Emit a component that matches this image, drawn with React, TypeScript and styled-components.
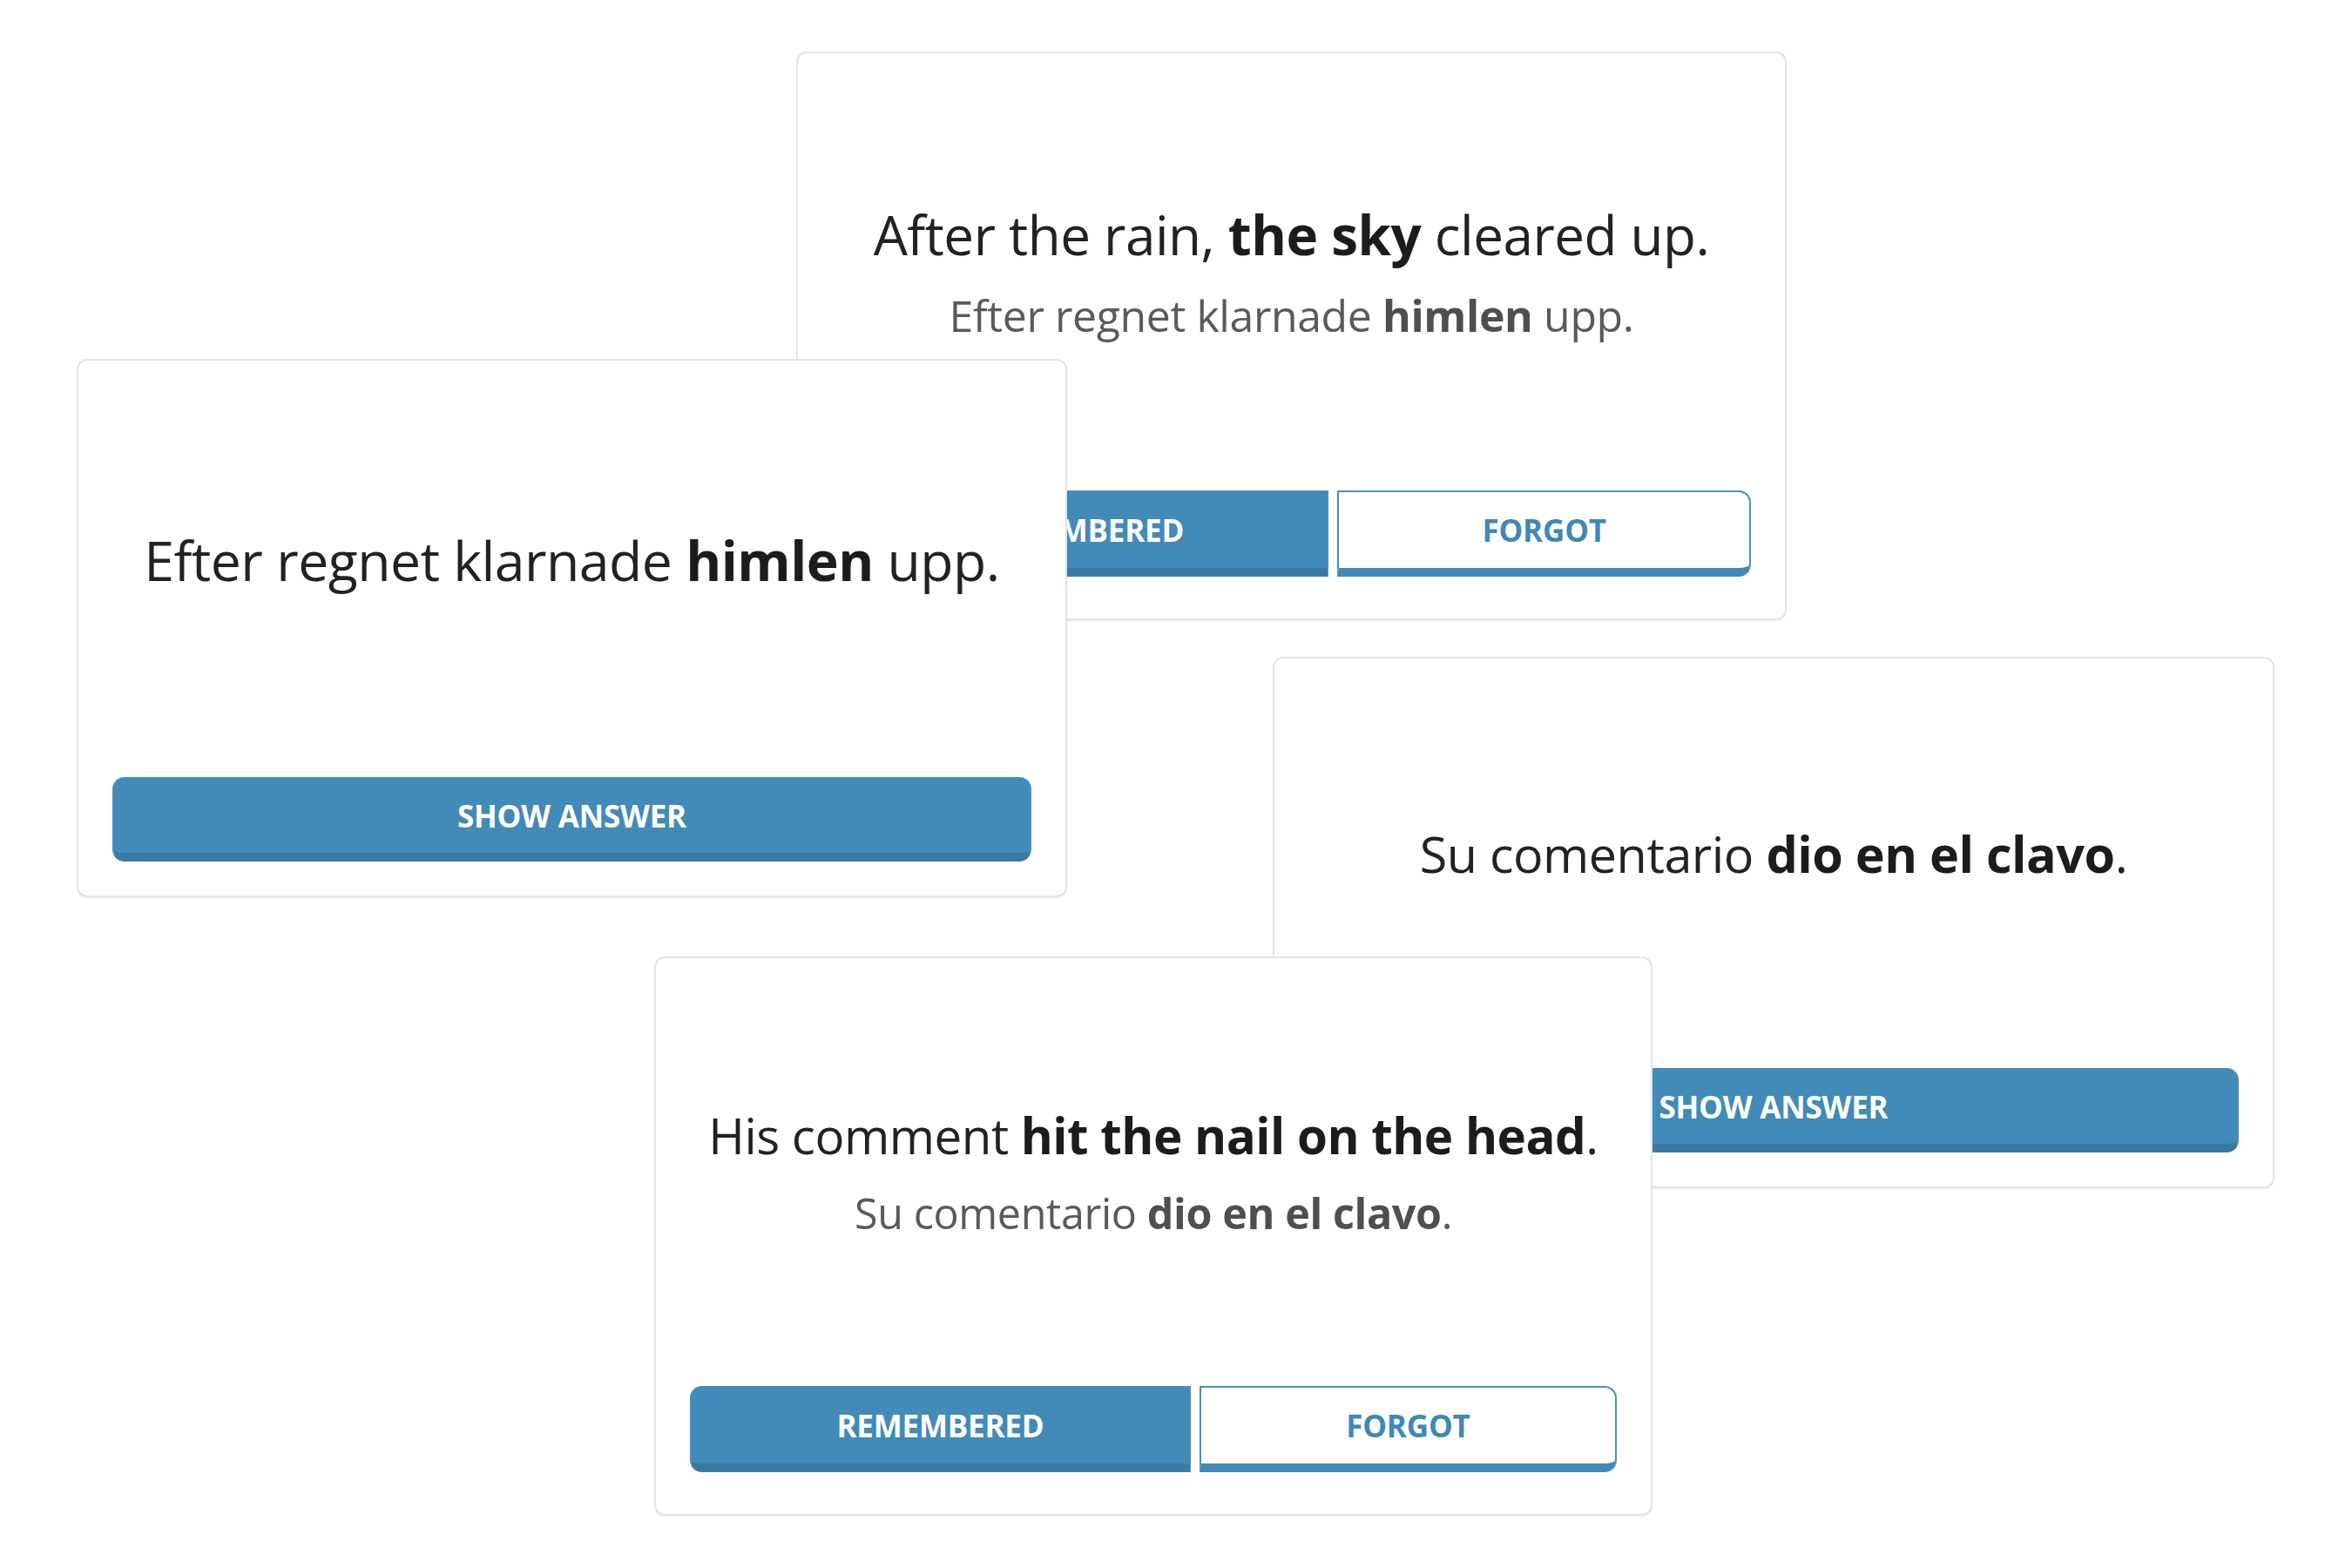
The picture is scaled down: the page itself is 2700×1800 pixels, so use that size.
import { createGlobalStyle, styled } from 'styled-components'

const GlobalStyle = createGlobalStyle`
  html, body {
    margin: 0;
    padding: 0;
    background: #ffffff;
  }
  body {
    font-family: 'Open Sans', 'Liberation Sans', sans-serif;
    color: #222222;
  }
`

type Part = { text: string; bold?: boolean }

type CardData = {
  x: number
  y: number
  w: number
  h: number
  qSize: number
  aSize?: number
  question: Part[]
  answer?: Part[]
}

const cards: CardData[] = [
  {
    x: 914,
    y: 59,
    w: 1137,
    h: 653,
    qSize: 62,
    aSize: 50,
    question: [{ text: 'After the rain, ' }, { text: 'the sky', bold: true }, { text: ' cleared up.' }],
    answer: [{ text: 'Efter regnet klarnade ' }, { text: 'himlen', bold: true }, { text: ' upp.' }],
  },
  {
    x: 88,
    y: 412,
    w: 1137,
    h: 618,
    qSize: 62.5,
    question: [{ text: 'Efter regnet klarnade ' }, { text: 'himlen', bold: true }, { text: ' upp.' }],
  },
  {
    x: 1461,
    y: 754,
    w: 1150,
    h: 610,
    qSize: 57.5,
    question: [{ text: 'Su comentario ' }, { text: 'dio en el clavo', bold: true }, { text: '.' }],
  },
  {
    x: 751,
    y: 1098,
    w: 1146,
    h: 642,
    qSize: 56.5,
    aSize: 48.5,
    question: [{ text: 'His comment ' }, { text: 'hit the nail on the head', bold: true }, { text: '.' }],
    answer: [{ text: 'Su comentario ' }, { text: 'dio en el clavo', bold: true }, { text: '.' }],
  },
]

const Sentence = ({ parts }: { parts: Part[] }) => (
  <>
    {parts.map((p, i) => (p.bold ? <b key={i}>{p.text}</b> : <span key={i}>{p.text}</span>))}
  </>
)

const App = () => {
  return (
    <Canvas>
      <GlobalStyle />
      {cards.map((c, i) => (
        <Card key={i} $x={c.x} $y={c.y} $w={c.w} $h={c.h} $answered={!!c.answer}>
          <Prompt $answered={!!c.answer}>
            <Question $size={c.qSize}>
              <Sentence parts={c.question} />
            </Question>
            {c.answer && (
              <Answer $size={c.aSize ?? 50}>
                <Sentence parts={c.answer} />
              </Answer>
            )}
          </Prompt>
          {c.answer ? (
            <ButtonRow>
              <GradeButton $side="left">Remembered</GradeButton>
              <GradeButton $side="right" $outline>
                Forgot
              </GradeButton>
            </ButtonRow>
          ) : (
            <ShowButton>Show answer</ShowButton>
          )}
        </Card>
      ))}
    </Canvas>
  )
}

const Canvas = styled.div`
  position: relative;
  width: 2700px;
  height: 1800px;
  overflow: hidden;
  background: #ffffff;
`

// cards sit on a free canvas and overlap each other, like windows
const Card = styled.div<{ $x: number; $y: number; $w: number; $h: number; $answered: boolean }>`
  position: absolute;
  left: ${p => p.$x}px;
  top: ${p => p.$y}px;
  width: ${p => p.$w}px;
  height: ${p => p.$h}px;
  box-sizing: border-box;
  display: flex;
  flex-direction: column;
  padding: 0 39px ${p => (p.$answered ? 48 : 39)}px;
  background: #ffffff;
  border: 2px solid #e3e3e3;
  border-radius: 12px;
  box-shadow: 0 2px 0 rgba(0, 0, 0, 0.04);
`

const Prompt = styled.div<{ $answered: boolean }>`
  flex: 1;
  display: flex;
  flex-direction: column;
  align-items: center;
  justify-content: center;
  text-align: center;
  padding-bottom: ${p => (p.$answered ? 0 : 22)}px;
`

const Question = styled.div<{ $size: number }>`
  font-size: ${p => p.$size}px;
  line-height: 1.2;
  color: #222222;
  letter-spacing: -0.5px;
  white-space: nowrap;

  b {
    font-weight: 700;
    color: #1c1c1c;
  }
`

const Answer = styled.div<{ $size: number }>`
  margin-top: 26px;
  font-size: ${p => p.$size}px;
  line-height: 1.2;
  color: #5a5a5a;
  letter-spacing: -0.4px;
  white-space: nowrap;

  b {
    font-weight: 700;
    color: #4f4f4f;
  }
`

const ButtonRow = styled.div`
  display: flex;
  gap: 10px;
  height: 99px;
`

const buttonText = `
  font-family: 'Open Sans', 'Liberation Sans', sans-serif;
  font-weight: 700;
  font-size: 35px;
  text-transform: uppercase;
  letter-spacing: -0.2px;
  box-sizing: border-box;
  display: flex;
  align-items: center;
  justify-content: center;
  padding-bottom: 2px;
  cursor: pointer;
`

const GradeButton = styled.button<{ $side: 'left' | 'right'; $outline?: boolean }>`
  ${buttonText}
  flex: 1 1 auto;
  padding-left: 20px;
  padding-right: 20px;
  color: ${p => (p.$outline ? '#3f88b6' : '#ffffff')};
  background: ${p => (p.$outline ? '#ffffff' : '#428ab7')};
  border: 2px solid #4a8fba;
  border-bottom: 10px solid ${p => (p.$outline ? '#428ab7' : '#3a7aa2')};
  border-radius: ${p => (p.$side === 'left' ? '14px 0 0 14px' : '0 14px 14px 0')};
`

const ShowButton = styled.button`
  ${buttonText}
  height: 97px;
  width: 100%;
  color: #ffffff;
  background: #428ab7;
  border: 2px solid #4a8fba;
  border-bottom: 10px solid #3a7aa2;
  border-radius: 14px;
`

export default App
